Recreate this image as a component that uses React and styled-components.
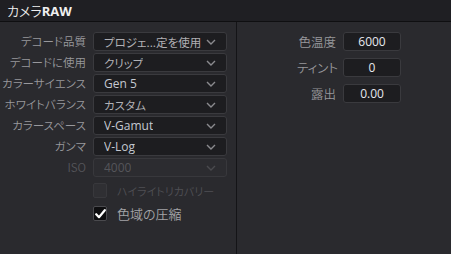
import React from "react";
import styled, { createGlobalStyle } from "styled-components";

const Global = createGlobalStyle`
  html, body { margin: 0; padding: 0; background: #28282c; }
  body { width: 451px; height: 254px; overflow: hidden; font-family: "Noto Sans CJK JP", "Noto Sans", sans-serif; }
  * { box-sizing: border-box; }
`;

const Frame = styled.div`
  width: 451px;
  height: 254px;
  display: flex;
  flex-direction: column;
  background: #28282c;
`;

const Header = styled.div`
  height: 22px;
  flex: none;
  background: #1f1f23;
  border-bottom: 1px solid #0f0f11;
  display: flex;
  align-items: center;
  padding-left: 7px;
  color: #f0f0f0;
  font-size: 13px;
  font-weight: 350;
  font-feature-settings: "palt";
`;

const Bold = styled.span`
  font-family: "Open Sans", "Noto Sans", sans-serif;
  font-weight: 700;
  font-size: 13px;
`;

const Body = styled.div`
  flex: 1;
  display: flex;
`;

const LeftPanel = styled.div`
  width: 237px;
  border-right: 1px solid #141417;
  background: #2a2a2e;
  padding-top: 10px;
  display: grid;
  grid-template-columns: 86px 134px;
  column-gap: 7px;
  row-gap: 2px;
  grid-auto-rows: 19px;
  align-content: start;
`;

const RightPanel = styled.div`
  flex: 1;
  background: #2a2a2e;
  padding-top: 10px;
  padding-left: 60px;
  display: grid;
  grid-template-columns: 39px 58px;
  column-gap: 7px;
  row-gap: 7px;
  grid-auto-rows: 19px;
  align-content: start;
`;

const Label = styled.div`
  text-align: right;
  font-size: ${(p) => p.$size || 11.5}px;
  font-weight: 350;
  line-height: 19px;
  color: ${(p) => (p.$disabled ? "#55555a" : "#98989c")};
  white-space: nowrap;
  font-feature-settings: "palt";
`;

const Select = styled.div`
  height: 19px;
  border-radius: 3px;
  border: 1px solid ${(p) => (p.$disabled ? "#38383c" : "#3a3a3e")};
  background: ${(p) => (p.$disabled ? "#2c2c30" : "#1d1d20")};
  display: flex;
  align-items: center;
  padding: 0 10px 0 10px;
  justify-content: space-between;
  color: ${(p) => (p.$disabled ? "#55555a" : "#b0b0b4")};
  font-size: 11.5px;
  font-weight: 350;
  font-feature-settings: "palt";
`;

const SelectText = styled.span`
  white-space: nowrap;
  overflow: hidden;
  font-family: ${(p) => (p.$latin ? '"Open Sans", "Noto Sans CJK JP", sans-serif' : '"Noto Sans CJK JP", sans-serif')};
  font-size: ${(p) => (p.$latin ? 12 : 11.5)}px;
  font-weight: 400;
  color: ${(p) => (p.$bright ? "#c4c8d0" : "inherit")};
`;

const Input = styled.div`
  height: 19px;
  border-radius: 3px;
  border: 1px solid #3a3a3e;
  background: #1d1d20;
  color: #e6e8ee;
  font-family: "Open Sans", sans-serif;
  font-size: 12px;
  display: flex;
  align-items: center;
  justify-content: center;
`;

const CheckRow = styled.div`
  grid-column: 2;
  display: flex;
  align-items: center;
  gap: 10px;
  margin-top: ${(p) => p.$mt || 0}px;
`;

const Box = styled.div`
  width: 14px;
  height: 15px;
  border-radius: 2px;
  border: 1px solid ${(p) => (p.$checked ? "#4a4a4e" : "#38383c")};
  background: ${(p) => (p.$checked ? "#0e0e10" : "#2f2f33")};
  display: flex;
  align-items: center;
  justify-content: center;
`;

const CheckText = styled.span`
  font-size: ${(p) => p.$size || 11}px;
  font-weight: 350;
  color: ${(p) => (p.$disabled ? "#505055" : "#a4a4a8")};
  white-space: nowrap;
  font-feature-settings: "palt";
`;

const Chevron = ({ color = "#8a8a8e" }) => (
  <svg width="10" height="6" viewBox="0 0 10 6">
    <polyline points="1,1 5,5 9,1" fill="none" stroke={color} strokeWidth="1.4" />
  </svg>
);

const rows = [
  { label: "デコード品質", value: "プロジェ...定を使用" },
  { label: "デコードに使用", value: "クリップ" },
  { label: "カラーサイエンス", value: "Gen 5", latin: true, bright: true },
  { label: "ホワイトバランス", value: "カスタム" },
  { label: "カラースペース", value: "V-Gamut", latin: true, bright: true },
  { label: "ガンマ", value: "V-Log", latin: true, bright: true },
  { label: "ISO", value: "4000", latin: true, disabled: true },
];

const right = [
  { label: "色温度", value: "6000" },
  { label: "ティント", value: "0" },
  { label: "露出", value: "0.00" },
];

export default function App() {
  return (
    <Frame>
      <Global />
      <Header>
        カメラ<Bold>RAW</Bold>
      </Header>
      <Body>
        <LeftPanel>
          {rows.map((r) => (
            <React.Fragment key={r.label}>
              <Label $disabled={r.disabled}>{r.label}</Label>
              <Select $disabled={r.disabled}>
                <SelectText $latin={r.latin} $bright={r.bright && !r.disabled}>
                  {r.value}
                </SelectText>
                <Chevron color={r.disabled ? "#4a4a4e" : "#8a8a8e"} />
              </Select>
            </React.Fragment>
          ))}
          <CheckRow $mt={4}>
            <Box />
            <CheckText $disabled>ハイライトリカバリー</CheckText>
          </CheckRow>
          <CheckRow $mt={8}>
            <Box $checked>
              <svg width="11" height="10" viewBox="0 0 11 10">
                <polyline points="1.2,5.2 4,8.2 9.8,1.2" fill="none" stroke="#ffffff" strokeWidth="2.2" strokeLinecap="round" strokeLinejoin="round" />
              </svg>
            </Box>
            <CheckText $size={13}>色域の圧縮</CheckText>
          </CheckRow>
        </LeftPanel>
        <RightPanel>
          {right.map((r) => (
            <React.Fragment key={r.label}>
              <Label $size={12.5}>{r.label}</Label>
              <Input>{r.value}</Input>
            </React.Fragment>
          ))}
        </RightPanel>
      </Body>
    </Frame>
  );
}
